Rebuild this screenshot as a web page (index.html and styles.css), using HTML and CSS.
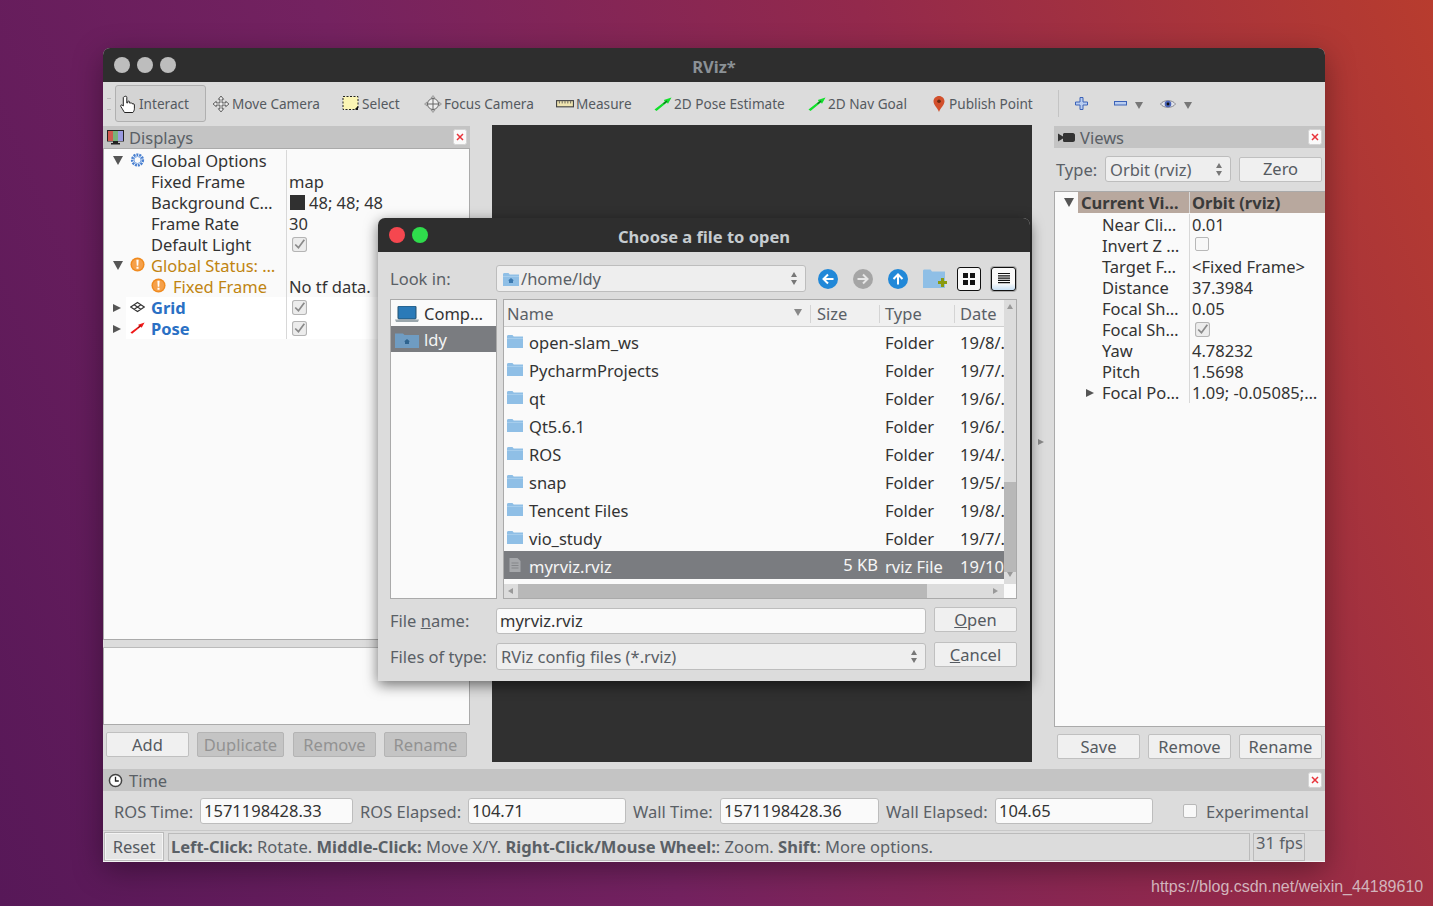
FILE: index.html
```html
<!DOCTYPE html>
<html lang="en">
<head>
  <meta charset="UTF-8" />
  <title>RViz*</title>
  <link rel="stylesheet" href="styles.css">
</head>
<body>
  <svg class="defs" width="0" height="0">
    <defs>
      <symbol id="folder" viewBox="0 0 16 14">
        <path d="M0 2.5C0 1.5.6 1 1.5 1h4l1.2 1.5H16V14H0z" fill="#8fbfe6"/>
        <path d="M0 4h16v1H0z" fill="#a6cdec"/>
      </symbol>
      <symbol id="warn" viewBox="0 0 16 16">
        <circle cx="8" cy="8" r="7.5" fill="#f08a1d"/>
        <circle cx="8" cy="8" r="6" fill="#f5a04a"/>
        <path d="M6.8 3h2.4l-.4 6.2H7.2zM6.9 10.4h2.2v2.2H6.9z" fill="#fff"/>
      </symbol>
      <symbol id="pose" viewBox="0 0 18 14">
        <path d="M.5 12.500 10.800 4.600 9.800 3 17.500.5 14 6.800 12.900 5.600 2.500 14z" fill="currentColor"/>
        <path d="M9.500 6.800 13 4.100" stroke="#111" stroke-opacity=".55" stroke-width="1.200"/>
      </symbol>
      <symbol id="close" viewBox="0 0 14 16">
        <rect x=".5" y=".5" width="13" height="15" rx="2" fill="#fafafa" stroke="#d4d4d4"/>
        <path d="M4 5l6 6M10 5l-6 6" stroke="#e8333a" stroke-width="1.5"/>
      </symbol>
      <symbol id="check" viewBox="0 0 14 14">
        <rect x=".5" y=".5" width="13" height="13" rx="2" fill="#ececec" stroke="#b4b4b4"/>
        <path d="M3 7l3 3 5.500-7.500" fill="none" stroke="#8a8a8a" stroke-width="1.600"/>
      </symbol>
    </defs>
  </svg>

  <div class="window">
    <div class="titlebar">
      <div class="lights">
        <span class="light"></span><span class="light"></span><span class="light"></span>
      </div>
      <span class="title-text">RViz*</span>
    </div>

    <div class="toolbar">
      <span class="grip"></span>
      <div class="tool tool-active">
        <svg class="tool-icon" viewBox="0 0 16 18"><path d="M5 1.500c1-.8 1.800 0 1.800 1V8l1-.2V6.500c1-.7 1.800-.2 1.800.6v1l1-.1c1-.4 1.500.2 1.500.8l1-.1c.9 0 1.300.6 1.300 1.300v3.800c0 1.200-.8 3-1.500 3.700H4.500C3.500 16 2.500 14 .8 11.500c-.5-1 .4-2 1.400-1.300L3.300 11V2.800c0-.7.7-1.300 1.700-1.300z" fill="#fff" stroke="#222" stroke-width="1"/></svg>
        <span>Interact</span>
      </div>
      <div class="tool tool-move">
        <svg class="tool-icon" viewBox="0 0 17 17"><path d="M8.500 1l2.500 3H9.500v3.500H13V6l3 2.500L13 11V9.500H9.500V13H11l-2.500 3L6 13h1.500V9.500H4V11L1 8.500 4 6v1.500h3.500V4H6z" fill="#eee" stroke="#555" stroke-width=".9"/></svg>
        <span>Move Camera</span>
      </div>
      <div class="tool tool-select">
        <svg class="tool-icon" viewBox="0 0 17 15"><rect x=".5" y=".5" width="15" height="13" fill="#fbf5b4" stroke="#222" stroke-dasharray="2 1.500"/><path d="M12 13.500h3.500V10z" fill="#111"/></svg>
        <span>Select</span>
      </div>
      <div class="tool tool-focus">
        <svg class="tool-icon" viewBox="0 0 18 18"><circle cx="9" cy="9" r="5.500" fill="#eee" stroke="#666"/><path d="M9 1v16M1 9h16" stroke="#666"/><path d="M9 .5l2 2.500H7zM9 17.500L7 15h4zM.5 9L3 7v4zM17.500 9L15 11V7z" fill="#ccc" stroke="#777" stroke-width=".5"/></svg>
        <span>Focus Camera</span>
      </div>
      <div class="tool tool-measure">
        <svg class="tool-icon" viewBox="0 0 16 7"><rect x=".5" y=".5" width="15" height="5.500" fill="#efe4b0" stroke="#444"/><path d="M3 1v2M5.500 1v2M8 1v2M10.500 1v2M13 1v2" stroke="#444" stroke-width=".7"/></svg>
        <span>Measure</span>
      </div>
      <div class="tool tool-pose">
        <svg class="tool-icon icon-green"><use href="#pose"/></svg>
        <span>2D Pose Estimate</span>
      </div>
      <div class="tool tool-nav">
        <svg class="tool-icon icon-green"><use href="#pose"/></svg>
        <span>2D Nav Goal</span>
      </div>
      <div class="tool tool-publish">
        <svg class="tool-icon" viewBox="0 0 11 16"><path d="M5.500 0C8.500 0 11 2.300 11 5.300 11 9 7 12 5.500 16 4 12 0 9 0 5.300 0 2.300 2.500 0 5.500 0z" fill="#d2502c"/><circle cx="5.500" cy="5.300" r="1.800" fill="#6a2a10"/></svg>
        <span>Publish Point</span>
      </div>
      <span class="tool-sep"></span>
      <div class="tool-mini tool-plus">
        <svg viewBox="0 0 13 13" width="13" height="13"><path d="M5 .5h3v4.500h4.500v3H8v4.500H5V8H.5V5H5z" fill="#b9cdf0" stroke="#3b62b8"/></svg>
      </div>
      <div class="tool-mini tool-minus">
        <svg viewBox="0 0 13 5" width="13" height="5"><rect x=".5" y=".5" width="12" height="3.500" fill="#b9cdf0" stroke="#3b62b8"/></svg>
        <span class="caret-down"></span>
      </div>
      <div class="tool-mini tool-eye">
        <svg viewBox="0 0 16 10" width="16" height="10"><path d="M.5 5C3.500.5 12.500.5 15.500 5 12.500 9.500 3.500 9.500.5 5z" fill="#dfe2ea" stroke="#8a8a90"/><circle cx="8" cy="5" r="3.300" fill="#4a64b8"/><circle cx="8" cy="5" r="1.400" fill="#111"/></svg>
        <span class="caret-down"></span>
      </div>
    </div>

    <div class="main">
      <div class="panel panel-displays">
        <div class="dock-head">
          <svg class="dock-icon" viewBox="0 0 17 15"><rect x=".5" y=".5" width="16" height="10.500" fill="#fff" stroke="#222"/><path d="M1 1h5v10H1z" fill="#d05a50"/><path d="M6 1h5v10H6z" fill="#7ab27a"/><path d="M11 1h5v10h-5z" fill="#9a9ae0"/><path d="M6 11h5v2h2v1.500H4V13h2z" fill="#222"/></svg>
          <span class="dock-title">Displays</span>
          <svg class="dock-close"><use href="#close"/></svg>
        </div>
        <div class="tree tree-displays">
          <div class="row"><div class="cell-name"><span class="arrow-open"></span><svg class="row-icon" viewBox="0 0 14 14"><circle cx="7" cy="7" r="5.300" fill="none" stroke="#4a80d0" stroke-width="2.600" stroke-dasharray="2 .9"/><circle cx="7" cy="7" r="3.500" fill="none" stroke="#7aa6e4"/></svg><span>Global Options</span></div><div class="cell-val"></div></div>
          <div class="row"><div class="cell-name child"><span>Fixed Frame</span></div><div class="cell-val">map</div></div>
          <div class="row"><div class="cell-name child"><span>Background C…</span></div><div class="cell-val"><span class="swatch"></span>48; 48; 48</div></div>
          <div class="row"><div class="cell-name child"><span>Frame Rate</span></div><div class="cell-val">30</div></div>
          <div class="row"><div class="cell-name child"><span>Default Light</span></div><div class="cell-val"><svg class="check"><use href="#check"/></svg></div></div>
          <div class="row warn-row"><div class="cell-name"><span class="arrow-open"></span><svg class="row-icon icon-warn"><use href="#warn"/></svg><span>Global Status: …</span></div><div class="cell-val"></div></div>
          <div class="row warn-row"><div class="cell-name warn-child"><svg class="row-icon icon-warn"><use href="#warn"/></svg><span>Fixed Frame</span></div><div class="cell-val">No tf data.</div></div>
          <div class="row row-plugin"><div class="cell-name"><span class="arrow-shut"></span><svg class="row-icon" viewBox="0 0 14 10"><path d="M7 .8 13.300 5 7 9.200.7 5z M3.800 2.900l6.300 4.200M10.200 2.900 3.900 7.100" fill="none" stroke="#333" stroke-width="1"/></svg><span>Grid</span></div><div class="cell-val"><svg class="check"><use href="#check"/></svg></div></div>
          <div class="row row-plugin"><div class="cell-name"><span class="arrow-shut"></span><svg class="row-icon icon-red"><use href="#pose"/></svg><span>Pose</span></div><div class="cell-val"><svg class="check"><use href="#check"/></svg></div></div>
        </div>
        <div class="splitter"></div>
        <div class="desc"></div>
        <div class="btn-row btn-row-displays">
          <button class="btn btn-add">Add</button>
          <button class="btn btn-off btn-dup">Duplicate</button>
          <button class="btn btn-off btn-rem">Remove</button>
          <button class="btn btn-off btn-ren">Rename</button>
        </div>
      </div>

      <div class="viewport"></div>
      <div class="handle"><span class="handle-arrow"></span></div>

      <div class="panel panel-views">
        <div class="dock-head">
          <svg class="dock-icon" viewBox="0 0 17 10"><path d="M0 1l5 3V2c0-1 .8-1.500 1.500-1.500h8.500c1 0 2 1 2 2v5c0 1-1 2-2 2H6.500C5.800 9.500 5 9 5 8V6L0 9z" fill="#333"/></svg>
          <span class="dock-title">Views</span>
          <svg class="dock-close"><use href="#close"/></svg>
        </div>
        <div class="type-row">
          <span class="label">Type:</span>
          <div class="combo combo-type"><span>Orbit (rviz)</span><span class="spin"></span></div>
          <button class="btn btn-zero">Zero</button>
        </div>
        <div class="tree tree-views">
          <div class="row row-head"><div class="cell-name"><span class="arrow-open"></span><span class="head-name">Current Vi…</span></div><div class="cell-val">Orbit (rviz)</div></div>
          <div class="row"><div class="cell-name child"><span>Near Cli…</span></div><div class="cell-val">0.01</div></div>
          <div class="row"><div class="cell-name child"><span>Invert Z …</span></div><div class="cell-val"><span class="box"></span></div></div>
          <div class="row"><div class="cell-name child"><span>Target F…</span></div><div class="cell-val">&lt;Fixed Frame&gt;</div></div>
          <div class="row"><div class="cell-name child"><span>Distance</span></div><div class="cell-val">37.3984</div></div>
          <div class="row"><div class="cell-name child"><span>Focal Sh…</span></div><div class="cell-val">0.05</div></div>
          <div class="row"><div class="cell-name child"><span>Focal Sh…</span></div><div class="cell-val"><svg class="check"><use href="#check"/></svg></div></div>
          <div class="row"><div class="cell-name child"><span>Yaw</span></div><div class="cell-val">4.78232</div></div>
          <div class="row"><div class="cell-name child"><span>Pitch</span></div><div class="cell-val">1.5698</div></div>
          <div class="row"><div class="cell-name child child-arrow"><span class="arrow-shut"></span><span>Focal Po…</span></div><div class="cell-val">1.09; -0.05085;…</div></div>
        </div>
        <div class="btn-row btn-row-views">
          <button class="btn">Save</button>
          <button class="btn">Remove</button>
          <button class="btn">Rename</button>
        </div>
      </div>
    </div>

    <div class="time-panel">
      <div class="dock-head dock-head-time">
        <svg class="dock-icon" viewBox="0 0 16 16"><circle cx="8" cy="8" r="6.500" fill="#fff" stroke="#444" stroke-width="1.600"/><path d="M8 4v4.500h3.500" fill="none" stroke="#222" stroke-width="1.400"/></svg>
        <span class="dock-title">Time</span>
        <svg class="dock-close"><use href="#close"/></svg>
      </div>
      <div class="time-row">
        <span class="label label-ros">ROS Time:</span><div class="field field-time">1571198428.33</div>
        <span class="label label-elapsed">ROS Elapsed:</span><div class="field field-elapsed">104.71</div>
        <span class="label label-wall">Wall Time:</span><div class="field field-wall-time">1571198428.36</div>
        <span class="label label-wall-el">Wall Elapsed:</span><div class="field field-wall">104.65</div>
        <span class="box box-exp"></span><span class="label">Experimental</span>
      </div>
    </div>

    <div class="status">
      <button class="btn-reset">Reset</button>
      <div class="status-msg"><b>Left-Click:</b> Rotate. <b>Middle-Click:</b> Move X/Y. <b>Right-Click/Mouse Wheel:</b>: Zoom. <b>Shift</b>: More options.</div>
      <div class="status-fps">31 fps</div>
    </div>
  </div>

  <!-- File dialog -->
  <div class="dialog">
    <div class="titlebar dialog-title">
      <div class="lights">
        <span class="light light-red"></span><span class="light light-green"></span>
      </div>
      <span class="title-text title-dialog">Choose a file to open</span>
    </div>
    <div class="dialog-body">
      <div class="look-row">
        <span class="label label-wide">Look in:</span>
        <div class="combo combo-look">
          <svg class="combo-icon" viewBox="0 0 16 14"><use href="#folder"/><path d="M8 6l3 2.500h-1V11H6V8.500H5z" fill="#3d7ab0"/></svg>
          <span>/home/ldy</span><span class="spin"></span>
        </div>
        <div class="nav-icons">
          <svg class="nav-icon" viewBox="0 0 20 20"><circle cx="10" cy="10" r="10" fill="#2188d8"/><path d="M15.500 10h-9M10 5.500 5.500 10l4.500 4.500" fill="none" stroke="#fff" stroke-width="2"/></svg>
          <svg class="nav-icon" viewBox="0 0 20 20"><circle cx="10" cy="10" r="10" fill="#a5a5a5"/><path d="M4.500 10h9M10 5.500l4.500 4.500-4.500 4.500" fill="none" stroke="#e6e6e6" stroke-width="2"/></svg>
          <svg class="nav-icon" viewBox="0 0 20 20"><circle cx="10" cy="10" r="10" fill="#2188d8"/><path d="M10 15.500v-9M5.500 10 10 5.500l4.500 4.500" fill="none" stroke="#fff" stroke-width="2"/></svg>
          <svg class="nav-new" viewBox="0 0 24 20"><path d="M0 2c0-1 .6-1.500 1.500-1.500h6L9 2.500h13V19H0z" fill="#8fbfe6"/><path d="M15 12h3V9h3v3h3v3h-3v3h-3v-3h-3z" fill="#8a9a10"/></svg>
          <span class="view-btn"><svg viewBox="0 0 14 14" width="14" height="14"><path d="M1 1h5v5H1zM8 1h5v5H8zM1 8h5v5H1zM8 8h5v5H8z" fill="#111"/></svg></span>
          <span class="view-btn view-on"><svg viewBox="0 0 14 12" width="14" height="12"><path d="M1 .5h12M1 2.800h12M1 5.100h12M1 7.400h12M1 9.700h12" stroke="#111" stroke-width="1.200"/></svg></span>
        </div>
      </div>

      <div class="browser">
        <div class="side">
          <div class="side-item">
            <svg class="side-icon" viewBox="0 0 24 16"><rect x="3" y="0" width="18" height="13" rx="1" fill="#2a7ab8" stroke="#23506e"/><path d="M0 13.500h24L23 16H1z" fill="#9aa6ac"/></svg>
            <span>Comp…</span>
          </div>
          <div class="side-item side-on">
            <svg class="side-icon" viewBox="0 0 24 16"><path d="M0 1.500h8L9.500 3H24v13H0z" fill="#6f9cc2"/><path d="M12 7l3 2.500h-1V12h-4V9.500H9z" fill="#2f648f"/></svg>
            <span>ldy</span>
          </div>
        </div>
        <div class="files">
          <div class="files-main">
            <div class="files-list">
              <div class="file-head">
                <div class="col-name head-cell head-name-cell">Name<span class="sort-caret"></span></div>
                <div class="col-size head-cell">Size</div>
                <div class="col-type head-cell">Type</div>
                <div class="col-date head-cell">Date I</div>
              </div>
              <div class="file-row"><div class="col-name"><svg class="file-icon"><use href="#folder"/></svg>open-slam_ws</div><div class="col-size"></div><div class="col-type">Folder</div><div class="col-date">19/8/.</div></div>
              <div class="file-row"><div class="col-name"><svg class="file-icon"><use href="#folder"/></svg>PycharmProjects</div><div class="col-size"></div><div class="col-type">Folder</div><div class="col-date">19/7/.</div></div>
              <div class="file-row"><div class="col-name"><svg class="file-icon"><use href="#folder"/></svg>qt</div><div class="col-size"></div><div class="col-type">Folder</div><div class="col-date">19/6/.</div></div>
              <div class="file-row"><div class="col-name"><svg class="file-icon"><use href="#folder"/></svg>Qt5.6.1</div><div class="col-size"></div><div class="col-type">Folder</div><div class="col-date">19/6/.</div></div>
              <div class="file-row"><div class="col-name"><svg class="file-icon"><use href="#folder"/></svg>ROS</div><div class="col-size"></div><div class="col-type">Folder</div><div class="col-date">19/4/.</div></div>
              <div class="file-row"><div class="col-name"><svg class="file-icon"><use href="#folder"/></svg>snap</div><div class="col-size"></div><div class="col-type">Folder</div><div class="col-date">19/5/.</div></div>
              <div class="file-row"><div class="col-name"><svg class="file-icon"><use href="#folder"/></svg>Tencent Files</div><div class="col-size"></div><div class="col-type">Folder</div><div class="col-date">19/8/.</div></div>
              <div class="file-row"><div class="col-name"><svg class="file-icon"><use href="#folder"/></svg>vio_study</div><div class="col-size"></div><div class="col-type">Folder</div><div class="col-date">19/7/.</div></div>
              <div class="file-row file-on"><div class="col-name"><svg class="file-icon" viewBox="0 0 16 14"><path d="M2.500 0h8L13.500 3v11h-11z" fill="#a6a8ab"/><path d="M4.500 5h7M4.500 7.500h7M4.500 10h7" stroke="#85878a"/></svg>myrviz.rviz</div><div class="col-size size-val">5 KB</div><div class="col-type">rviz File</div><div class="col-date">19/10</div></div>
            </div>
            <div class="vscroll">
              <span class="scroll-up"></span>
              <div class="vthumb"></div>
              <span class="scroll-down"></span>
            </div>
          </div>
          <div class="hscroll">
            <span class="scroll-left"></span>
            <div class="hthumb"></div>
            <span class="scroll-right"></span>
          </div>
        </div>
      </div>

      <div class="name-row">
        <span class="label label-wide">File <u>n</u>ame:</span>
        <div class="field field-name">myrviz.rviz</div>
        <button class="btn btn-dialog btn-open"><u>O</u>pen</button>
      </div>
      <div class="name-row type-filter">
        <span class="label label-wide">Files of type:</span>
        <div class="combo combo-filter"><span>RViz config files (*.rviz)</span><span class="spin"></span></div>
        <button class="btn btn-dialog btn-cancel"><u>C</u>ancel</button>
      </div>
    </div>
  </div>

  <div class="watermark">https://blog.csdn.net/weixin_44189610</div>
</body>
</html>
```

FILE: styles.css
```css
body {
  margin: 0;
  width: 1433px;
  height: 906px;
  overflow: hidden;
  position: relative;
  font-family: "Noto Sans", sans-serif;
  font-size: 16.5px;
  color: #3a3a3a;
  background: linear-gradient(68deg, #571858 0%, #742260 38%, #93294c 68%, #b83c2e 100%);
}
.defs {
  position: absolute;
}
svg {
  display: block;
  flex: none;
}
.window {
  position: absolute;
  left: 103px;
  top: 48px;
  width: 1222px;
  height: 814px;
  display: flex;
  flex-direction: column;
  background-color: #dcdcdc;
  border-radius: 7px 7px 0 0;
  box-shadow: 0 8px 30px rgba(0, 0, 0, 0.35);
  overflow: hidden;
}
.titlebar {
  height: 34px;
  flex: none;
  background-color: #2e2e2e;
  display: flex;
  align-items: center;
  position: relative;
}
.lights {
  display: flex;
  gap: 7px;
  margin-left: 11px;
}
.light {
  width: 16px;
  height: 16px;
  border-radius: 50%;
  background-color: #bdbdbd;
}
.light-red {
  background-color: #f5474f;
}
.light-green {
  background-color: #2fdc4c;
}
.title-text {
  position: absolute;
  left: 0;
  right: 0;
  top: 7px;
  text-align: center;
  font-weight: bold;
  font-size: 16.5px;
  color: #8b9196;
}
.title-dialog {
  color: #c6ccd0;
}

/* toolbar */
.toolbar {
  height: 43px;
  flex: none;
  display: flex;
  align-items: center;
  font-size: 13.6px;
  color: #555a60;
}
.grip {
  width: 4px;
  height: 10px;
  margin-left: 4px;
  margin-right: 4px;
  border-top: 1px solid #bbb;
  border-bottom: 1px solid #bbb;
}
.tool {
  display: flex;
  align-items: center;
  height: 37px;
  gap: 2px;
}
.tool-active {
  width: 91px;
  box-sizing: border-box;
  background-color: #d4d4d4;
  border: 1px solid #b0b0b0;
  border-radius: 3px;
  padding-left: 3px;
}
.tool-icon {
  width: 18px;
  height: 18px;
}
.tool-move {
  width: 130px;
  margin-left: 6px;
}
.tool-select {
  width: 82px;
}
.tool-select .tool-icon {
  width: 18px;
  height: 15px;
}
.tool-focus {
  width: 132px;
}
.tool-measure {
  width: 98px;
}
.tool-measure .tool-icon {
  width: 18px;
  height: 8px;
}
.tool-pose {
  width: 154px;
}
.tool-nav {
  width: 123px;
}
.tool-publish {
  width: 127px;
}
.tool-publish .tool-icon {
  height: 16px;
  width: 16px;
}
.icon-green {
  color: #12e02c;
}
.icon-red {
  color: #f01818;
}
.tool-sep {
  width: 1px;
  height: 27px;
  background-color: #c4c4c4;
}
.tool-mini {
  display: flex;
  align-items: center;
  gap: 8px;
}
.tool-plus {
  margin-left: 16px;
}
.tool-minus {
  margin-left: 26px;
}
.tool-eye {
  margin-left: 17px;
}
.caret-down {
  width: 0;
  height: 0;
  border-left: 4px solid transparent;
  border-right: 4px solid transparent;
  border-top: 7px solid #777;
  margin-top: 3px;
}

/* main area */
.main {
  height: 643px;
  flex: none;
  display: flex;
}
.panel {
  display: flex;
  flex-direction: column;
}
.panel-displays {
  width: 367px;
}
.dock-head {
  height: 22px;
  margin-top: 1px;
  flex: none;
  display: flex;
  align-items: center;
  background-color: #c4c4c4;
  padding-left: 4px;
  color: #5a6066;
}
.dock-icon {
  width: 17px;
  height: 15px;
  margin-right: 5px;
}
.dock-title {
  flex: 1;
}
.dock-close {
  width: 14px;
  height: 16px;
  margin-right: 3px;
}
.tree {
  background-color: #fafafa;
  border: 1px solid #aaa;
  color: #333;
  box-sizing: border-box;
}
.tree-displays {
  height: 492px;
  padding-top: 1px;
}
.row {
  height: 21px;
  display: flex;
  line-height: 21px;
  white-space: nowrap;
}
.cell-name {
  width: 182px;
  flex: none;
  display: flex;
  align-items: center;
  border-right: 1px solid #d8d8d8;
  overflow: hidden;
}
.cell-val {
  padding-left: 2px;
  flex: 1;
  display: flex;
  align-items: center;
}
.child {
  padding-left: 47px;
  width: 135px;
}
.arrow-open {
  width: 0;
  height: 0;
  margin-left: 9px;
  margin-right: 6px;
  border-left: 5px solid transparent;
  border-right: 5px solid transparent;
  border-top: 9px solid #555;
  flex: none;
}
.arrow-shut {
  width: 0;
  height: 0;
  margin-left: 9px;
  margin-right: 8px;
  border-top: 4.5px solid transparent;
  border-bottom: 4.5px solid transparent;
  border-left: 8px solid #555;
  flex: none;
}
.row-icon {
  width: 15px;
  height: 14px;
  margin-left: 1px;
  margin-right: 6px;
  margin-top: -2px;
}
.icon-warn {
  width: 15px;
  height: 15px;
  margin-right: 6px;
}
.warn-row .cell-name {
  color: #c08410;
}
.warn-child {
  padding-left: 46px;
  width: 136px;
}
.warn-child .icon-warn {
  margin-right: 7px;
}
.row-plugin {
  background: linear-gradient(to right, transparent 22px, #fff 22px);
}
.row-plugin .cell-name {
  color: #2a70c4;
  font-weight: bold;
}
.swatch {
  width: 15px;
  height: 15px;
  background-color: #303030;
  margin: 0 4px 0 1px;
}
.check {
  width: 15px;
  height: 15px;
  margin-left: 3px;
  margin-top: -1px;
}
.box {
  width: 14px;
  height: 14px;
  display: block;
  background-color: #f8f8f8;
  border: 1px solid #b8b8b8;
  border-radius: 2px;
  box-sizing: border-box;
  margin-left: 3px;
  margin-top: -3px;
}
.splitter {
  height: 8px;
  flex: none;
  border-bottom: 1px solid #bbb;
  box-sizing: border-box;
}
.desc {
  height: 77px;
  flex: none;
  background-color: #fafafa;
  border: 1px solid #aaa;
  border-top: none;
  box-sizing: border-box;
}
.btn-row {
  display: flex;
}
.btn-row-displays {
  margin-top: 7px;
  padding-left: 3px;
  gap: 8px;
}
.btn {
  font-family: inherit;
  font-size: 16.5px;
  color: #555a60;
  background-color: #f0f0f0;
  border: 1px solid #c0c0c0;
  border-radius: 2px;
  height: 25px;
  width: 83px;
  padding: 0;
  line-height: 22px;
}
.btn-off {
  background-color: #c4c4c4;
  border-color: #b4b4b4;
  color: #929292;
}
.btn-dup {
  width: 87px;
  margin-right: 1px;
}
.viewport {
  width: 540px;
  height: 637px;
  margin-left: 22px;
  background-color: #303030;
}
.handle {
  width: 22px;
  flex: none;
  display: flex;
  align-items: center;
  justify-content: center;
  height: 637px;
}
.handle-arrow {
  width: 0;
  height: 0;
  border-top: 3.5px solid transparent;
  border-bottom: 3.5px solid transparent;
  border-left: 6px solid #888;
  margin-right: 4px;
  margin-bottom: 4px;
}
.panel-views {
  width: 271px;
}
.type-row {
  height: 26px;
  margin-top: 8px;
  flex: none;
  display: flex;
  align-items: center;
}
.label {
  color: #5a6066;
  white-space: nowrap;
}
.type-row .label {
  margin-left: 2px;
  width: 49px;
}
.combo {
  display: flex;
  align-items: center;
  height: 26px;
  box-sizing: border-box;
  border: 1px solid #bdbdbd;
  border-radius: 3px;
  background-color: #eeeeee;
  color: #5a6066;
  padding-left: 4px;
  position: relative;
}
.combo-type {
  width: 126px;
}
.spin {
  position: absolute;
  right: 7px;
  top: 6px;
  width: 7px;
  height: 13px;
}
.spin::before,
.spin::after {
  content: "";
  position: absolute;
  left: 0;
  border-left: 3.5px solid transparent;
  border-right: 3.5px solid transparent;
}
.spin::before {
  top: 0;
  border-bottom: 5px solid #777;
}
.spin::after {
  bottom: 0;
  border-top: 5px solid #777;
}
.btn-zero {
  margin-left: 8px;
}
.tree-views {
  margin-top: 9px;
  height: 536px;
  border-right: none;
}
.tree-views .cell-name {
  width: 134px;
}
.tree-views .child {
  padding-left: 47px;
  width: 87px;
}
.tree-views .child-arrow {
  padding-left: 31px;
  width: 103px;
}
.child-arrow .arrow-shut {
  margin-left: 0;
  margin-right: 8px;
}
.row-head {
  font-weight: bold;
  color: #3a3a3a;
  height: 21px;
  margin-bottom: 1px;
}
.row-head .arrow-open {
  margin-right: 8px;
}
.row-head .cell-val {
  background-color: #b8a89e;
}
.head-name {
  background-color: #b8a89e;
  align-self: stretch;
  padding-left: 3px;
  flex: 1;
  margin-left: -4px;
}
.btn-row-views {
  margin-top: 7px;
  padding-left: 3px;
  gap: 8px;
}

/* bottom */
.time-panel {
  height: 62px;
  flex: none;
}
.dock-head-time {
  margin-top: 1px;
}
.time-row {
  display: flex;
  align-items: center;
  height: 26px;
  margin-top: 7px;
  padding-left: 11px;
}
.label-ros {
  width: 86px;
}
.label-elapsed {
  width: 108px;
}
.label-wall {
  width: 87px;
}
.label-wall-el {
  width: 109px;
}
.field {
  height: 26px;
  box-sizing: border-box;
  background-color: #fafafa;
  border: 1px solid #bdbdbd;
  border-radius: 3px;
  padding-left: 3px;
  line-height: 24px;
  color: #333;
}
.field-time {
  width: 153px;
  margin-right: 7px;
}
.field-elapsed {
  width: 158px;
  margin-right: 7px;
}
.field-wall-time {
  width: 159px;
  margin-right: 7px;
}
.field-wall {
  width: 158px;
}
.box-exp {
  margin: 0 9px 0 30px;
}
.status {
  height: 32px;
  flex: none;
  display: flex;
  align-items: center;
  border-top: 1px solid #c8c8c8;
  box-sizing: border-box;
  padding: 1px 0 0 1px;
  border-bottom: 1px solid #f4f4f4;
}
.btn-reset {
  font-family: inherit;
  font-size: 16.5px;
  color: #555a60;
  width: 60px;
  height: 29px;
  background-color: #e4e4e4;
  border: 1px solid #bbb;
  outline: 1px solid #f4f4f4;
  outline-offset: -2px;
  padding: 0;
}
.status-msg {
  width: 1082px;
  box-sizing: border-box;
  height: 28px;
  margin-left: 4px;
  border: 1px solid #bbb;
  padding-left: 2px;
  line-height: 26px;
  color: #5a6066;
  white-space: nowrap;
}
.status-fps {
  width: 52px;
  height: 28px;
  margin-left: 3px;
  border: 1px solid #bbb;
  box-sizing: border-box;
  padding-left: 2px;
  line-height: 18px;
  color: #5a6066;
  white-space: nowrap;
}

/* dialog */
.dialog {
  position: absolute;
  left: 378px;
  top: 218px;
  width: 652px;
  height: 463px;
  background-color: #dcdcdc;
  border-radius: 7px 7px 0 0;
  box-shadow: 0 4px 14px rgba(0, 0, 0, 0.55);
  overflow: hidden;
}
.dialog-body {
  padding: 13px 13px 0 12px;
}
.look-row {
  display: flex;
  align-items: center;
  height: 27px;
}
.label-wide {
  width: 106px;
  flex: none;
}
.combo-look {
  width: 310px;
  height: 27px;
  padding-left: 6px;
  flex: none;
}
.combo-icon {
  width: 16px;
  height: 14px;
  margin-right: 2px;
}
.nav-icons {
  display: flex;
  align-items: center;
  margin-left: 12px;
}
.nav-icon {
  width: 20px;
  height: 20px;
  margin-right: 15px;
}
.nav-new {
  width: 24px;
  height: 20px;
  margin-right: 10px;
}
.view-btn {
  width: 24px;
  height: 24px;
  box-sizing: border-box;
  border: 1px solid #111;
  border-radius: 3px;
  background-color: #f8f8f8;
  display: flex;
  align-items: center;
  justify-content: center;
  margin-right: 10px;
}
.view-on {
  width: 25px;
  box-shadow: 0 0 0 1px #aaa;
  background: linear-gradient(#fafafa 70%, #c8e0f4);
  margin-right: 0;
}
.browser {
  display: flex;
  margin-top: 7px;
  height: 300px;
}
.side {
  width: 107px;
  box-sizing: border-box;
  background-color: #fafafa;
  border: 1px solid #aaa;
  flex: none;
  height: 300px;
}
.side-item {
  height: 26px;
  display: flex;
  align-items: center;
  color: #333;
  box-sizing: border-box;
  padding-top: 1px;
}
.side-icon {
  width: 24px;
  height: 16px;
  margin: 0 5px 0 4px;
}
.side-on {
  background-color: #7a7c80;
  color: #f4f4f4;
}
.files {
  width: 514px;
  margin-left: 6px;
  box-sizing: border-box;
  border: 1px solid #aaa;
  background-color: #fafafa;
  height: 300px;
  display: flex;
  flex-direction: column;
}
.files-main {
  display: flex;
  height: 279px;
  flex: none;
}
.files-list {
  width: 500px;
  overflow: hidden;
}
.file-head {
  height: 27px;
  display: flex;
  align-items: center;
  background-color: #f0f0f0;
  border-bottom: 1px solid #d0d0d0;
  box-sizing: border-box;
  color: #5a6066;
  padding-top: 2px;
}
.head-cell {
  height: 18px;
  line-height: 18px;
  border-right: 1px solid #d4d4d4;
  box-sizing: border-box;
  position: relative;
}
.head-cell:last-child {
  border-right: none;
}
.head-name-cell {
  padding-left: 22px;
}
.sort-caret {
  position: absolute;
  right: 8px;
  top: 4px;
  border-left: 4px solid transparent;
  border-right: 4px solid transparent;
  border-top: 7px solid #888;
}
.file-row {
  height: 28px;
  display: flex;
  align-items: center;
  color: #333;
  white-space: nowrap;
  box-sizing: border-box;
  padding-top: 2px;
}
.col-name {
  width: 307px;
  flex: none;
  display: flex;
  align-items: center;
  padding-left: 3px;
  box-sizing: border-box;
}
.col-size {
  width: 69px;
  flex: none;
  padding-left: 6px;
  box-sizing: border-box;
}
.col-type {
  width: 75px;
  flex: none;
  padding-left: 5px;
  box-sizing: border-box;
}
.col-date {
  width: 49px;
  flex: none;
  padding-left: 5px;
  box-sizing: border-box;
  overflow: hidden;
}
.file-icon {
  width: 16px;
  height: 14px;
  margin-right: 6px;
  margin-top: -3px;
}
.file-on {
  background-color: #7a7c80;
  color: #f6f6f6;
}
.size-val {
  padding: 0 2px 4px 0;
  text-align: right;
}
.vscroll {
  width: 12px;
  background-color: #dcdcdc;
  position: relative;
  flex: none;
  height: 284px;
}
.vthumb {
  position: absolute;
  left: 0;
  right: 0;
  top: 182px;
  height: 90px;
  background-color: #b8b8b8;
}
.scroll-up,
.scroll-down,
.scroll-left,
.scroll-right {
  position: absolute;
  width: 0;
  height: 0;
}
.scroll-up {
  top: 4px;
  left: 3px;
  border-left: 3px solid transparent;
  border-right: 3px solid transparent;
  border-bottom: 5px solid #999;
}
.scroll-down {
  bottom: 7px;
  left: 3px;
  border-left: 3px solid transparent;
  border-right: 3px solid transparent;
  border-top: 5px solid #999;
}
.hscroll {
  height: 14px;
  margin-top: 5px;
  width: 500px;
  background-color: #dcdcdc;
  position: relative;
  flex: none;
}
.hthumb {
  position: absolute;
  left: 14px;
  width: 409px;
  top: 0;
  bottom: 0;
  background-color: #b8b8b8;
}
.scroll-left {
  left: 4px;
  top: 4px;
  border-top: 3px solid transparent;
  border-bottom: 3px solid transparent;
  border-right: 5px solid #999;
}
.scroll-right {
  right: 6px;
  top: 4px;
  border-top: 3px solid transparent;
  border-bottom: 3px solid transparent;
  border-left: 5px solid #999;
}
.name-row {
  display: flex;
  align-items: center;
  margin-top: 8px;
}
.type-filter {
  margin-top: 8px;
}
.field-name {
  width: 430px;
  height: 26px;
}
.combo-filter {
  width: 430px;
  height: 27px;
}
.btn-dialog {
  margin-left: 8px;
  width: 83px;
}
.btn-open {
  margin-bottom: 2px;
}
.btn-cancel {
  margin-bottom: 4px;
}
.watermark {
  position: absolute;
  left: 1151px;
  top: 878px;
  font-family: "Liberation Sans", sans-serif;
  font-size: 16px;
  color: #d2b4bc;
  white-space: nowrap;
}
```
